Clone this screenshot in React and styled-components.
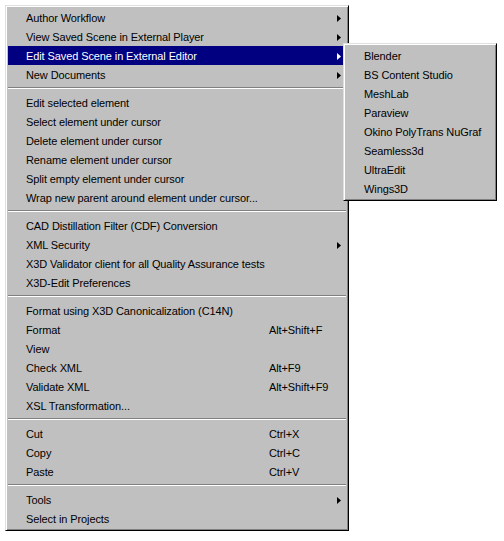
import React from "react";
import styled, { createGlobalStyle } from "styled-components";

const GlobalStyle = createGlobalStyle`
  html, body { margin: 0; padding: 0; background: #fff; }
  * { box-sizing: border-box; }
`;

const Page = styled.div`
  padding: 5px;
  font-family: "Liberation Sans", Arial, sans-serif;
  font-size: 11px;
  letter-spacing: -0.1px;
  color: #000;
`;

const MenuWrap = styled.div`
  position: relative;
  width: 344px;
`;

const Panel = styled.div`
  width: ${(p) => p.$width}px;
  background: #c0c0c0;
  border: 1px solid;
  border-color: #dfdfdf #000 #000 #dfdfdf;
  box-shadow: inset 1px 1px 0 #fff, inset -1px -1px 0 #808080;
  padding: 2px;
  display: flex;
  flex-direction: column;
`;

const SubPanel = styled(Panel)`
  position: absolute;
  left: 338px;
  top: 38px;
  z-index: 2;
`;

const Row = styled.div`
  display: grid;
  grid-template-columns: ${(p) => (p.$sub ? "1fr" : "243px 1fr 4px")};
  align-items: center;
  height: 19px;
  padding-left: 18px;
  padding-right: 5px;
  white-space: nowrap;
  background: ${(p) => (p.$active ? "#000080" : "transparent")};
  color: ${(p) => (p.$active ? "#fff" : "#000")};
`;

const Label = styled.span`
  line-height: 19px;
  padding-top: 1px;
`;

const Shortcut = styled.span`
  line-height: 19px;
  padding-top: 1px;
`;

const Arrow = styled.svg`
  display: block;
  width: 4px;
  height: 7px;
`;

const Separator = styled.div`
  height: 9px;
  padding-top: 3px;
  &::after {
    content: "";
    display: block;
    border-top: 1px solid #808080;
    border-bottom: 1px solid #fff;
  }
`;

const groups = [
  [
    { label: "Author Workflow", sub: true },
    { label: "View Saved Scene in External Player", sub: true },
    { label: "Edit Saved Scene in External Editor", sub: true, active: true },
    { label: "New Documents", sub: true },
  ],
  [
    { label: "Edit selected element" },
    { label: "Select element under cursor" },
    { label: "Delete element under cursor" },
    { label: "Rename element under cursor" },
    { label: "Split empty element under cursor" },
    { label: "Wrap new parent around element under cursor..." },
  ],
  [
    { label: "CAD Distillation Filter (CDF) Conversion" },
    { label: "XML Security", sub: true },
    { label: "X3D Validator client for all Quality Assurance tests" },
    { label: "X3D-Edit Preferences" },
  ],
  [
    { label: "Format using X3D Canonicalization (C14N)" },
    { label: "Format", key: "Alt+Shift+F" },
    { label: "View" },
    { label: "Check XML", key: "Alt+F9" },
    { label: "Validate XML", key: "Alt+Shift+F9" },
    { label: "XSL Transformation..." },
  ],
  [
    { label: "Cut", key: "Ctrl+X" },
    { label: "Copy", key: "Ctrl+C" },
    { label: "Paste", key: "Ctrl+V" },
  ],
  [
    { label: "Tools", sub: true },
    { label: "Select in Projects" },
  ],
];

const editors = [
  "Blender",
  "BS Content Studio",
  "MeshLab",
  "Paraview",
  "Okino PolyTrans NuGraf",
  "Seamless3d",
  "UltraEdit",
  "Wings3D",
];

function SubArrow({ active }) {
  return (
    <Arrow viewBox="0 0 4 7">
      <polygon points="0,0 4,3.5 0,7" fill={active ? "#fff" : "#000"} />
    </Arrow>
  );
}

export default function App() {
  return (
    <>
      <GlobalStyle />
      <Page>
        <MenuWrap>
          <Panel $width={344}>
            {groups.map((g, gi) => (
              <React.Fragment key={gi}>
                {gi > 0 && <Separator />}
                {g.map((it) => (
                  <Row key={it.label} $active={it.active}>
                    <Label>{it.label}</Label>
                    <Shortcut>{it.key || ""}</Shortcut>
                    {it.sub ? <SubArrow active={it.active} /> : <span />}
                  </Row>
                ))}
              </React.Fragment>
            ))}
          </Panel>
          <SubPanel $width={154}>
            {editors.map((e) => (
              <Row key={e} $sub>
                <Label>{e}</Label>
              </Row>
            ))}
          </SubPanel>
        </MenuWrap>
      </Page>
    </>
  );
}
